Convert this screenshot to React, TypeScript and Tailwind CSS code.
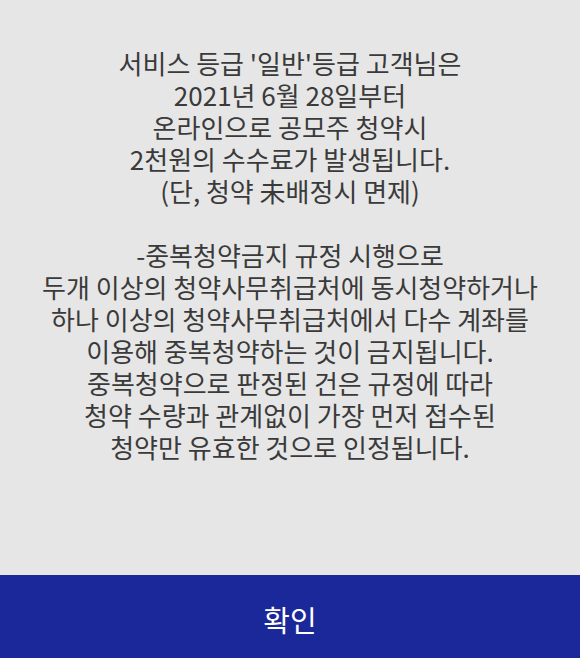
export default function App() {
  const first = [
    "서비스 등급 '일반'등급 고객님은",
    '2021년 6월 28일부터',
    '온라인으로 공모주 청약시',
    '2천원의 수수료가 발생됩니다.',
    '(단, 청약 未배정시 면제)',
  ];
  const second = [
    '-중복청약금지 규정 시행으로',
    '두개 이상의 청약사무취급처에 동시청약하거나',
    '하나 이상의 청약사무취급처에서 다수 계좌를',
    '이용해 중복청약하는 것이 금지됩니다.',
    '중복청약으로 판정된 건은 규정에 따라',
    '청약 수량과 관계없이 가장 먼저 접수된',
    '청약만 유효한 것으로 인정됩니다.',
  ];

  return (
    <div
      className="flex h-[658px] w-[580px] flex-col bg-[#e6e6e6]"
      style={{ fontFamily: '"Noto Sans CJK KR", "Noto Sans", sans-serif' }}
    >
      <div className="flex flex-1 flex-col items-center pt-[47px] text-center text-[26px] leading-[32px] text-[#3a3a3a]">
        {first.map((line) => (
          <p key={line}>{line}</p>
        ))}
        <div className="h-[32px]" />
        {second.map((line) => (
          <p key={line}>{line}</p>
        ))}
      </div>
      <button className="flex h-[83px] w-full items-center justify-center bg-[#1a289a] pt-[6px] text-[29px] text-white">
        확인
      </button>
    </div>
  );
}
